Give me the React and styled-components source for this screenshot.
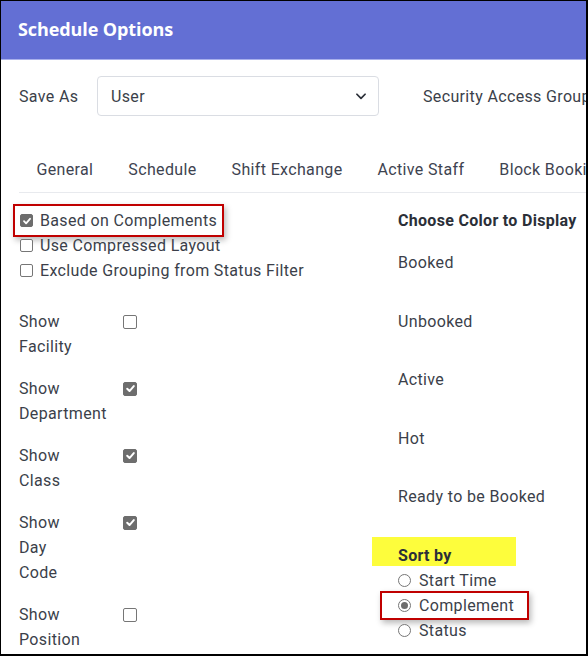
import React from 'react'
import styled, { createGlobalStyle } from 'styled-components'

const GlobalStyle = createGlobalStyle`
  html, body {
    margin: 0;
    padding: 0;
    background: #ffffff;
  }
  * {
    box-sizing: border-box;
  }
`

const Frame = styled.div`
  width: 588px;
  height: 656px;
  overflow: hidden;
  border: 1px solid #000;
  border-right-width: 2px;
  border-bottom-width: 2px;
  background: #fff;
  font-family: Roboto, 'Liberation Sans', sans-serif;
  font-size: 16px;
  letter-spacing: 0.35px;
  color: #3b3f4a;
  display: flex;
  flex-direction: column;
`

const Header = styled.header`
  height: 59px;
  flex: none;
  background: #636fd4;
  border-bottom: 1px solid #a9b0ec;
  display: flex;
  align-items: center;
  padding: 0 17px 3px;
`

const Title = styled.h1`
  margin: 0;
  color: #fff;
  font-family: 'Open Sans', Roboto, sans-serif;
  font-weight: 700;
  font-size: 18px;
  letter-spacing: -0.1px;
  white-space: nowrap;
`

const SaveRow = styled.div`
  display: flex;
  align-items: center;
  padding: 16px 0 0 18px;
  white-space: nowrap;
`

const FieldLabel = styled.span`
  width: 78px;
  flex: none;
`

const Select = styled.div`
  width: 282px;
  height: 40px;
  flex: none;
  border: 1px solid #dadde3;
  border-radius: 4px;
  display: flex;
  align-items: center;
  justify-content: space-between;
  padding: 0 10px 0 13px;
`

const SideLabel = styled.span`
  margin-left: 44px;
`

const Tabs = styled.nav`
  display: flex;
  margin: 32px 0 0 18px;
  border-bottom: 1px solid #e8eaee;
  white-space: nowrap;
`

const Tab = styled.span`
  padding: 10px 17.5px;
  line-height: 24px;
  color: #3e4350;
  flex: none;
`

const Body = styled.div`
  display: grid;
  grid-template-columns: 380px 1fr;
  padding: 15px 0 0 17px;
`

const Column = styled.div`
  display: flex;
  flex-direction: column;
  white-space: nowrap;
`

const CheckRow = styled.label`
  display: flex;
  align-items: center;
  gap: 7px;
  line-height: 25px;
  padding-left: 2px;
`

const Annotated = styled.div`
  display: flex;
  align-self: flex-start;
  border: 2px solid #c00000;
  box-shadow: 2px 3px 6px rgba(0, 0, 0, 0.28);
  margin: ${({ $margin }) => $margin};
  padding: ${({ $padding }) => $padding};
`

const Box = styled.span`
  width: ${({ $size }) => $size}px;
  height: ${({ $size }) => $size}px;
  flex: none;
  border-radius: 2px;
  border: 1px solid ${({ $checked }) => ($checked ? '#6d6d6d' : '#767676')};
  background: ${({ $checked }) => ($checked ? '#6d6d6d' : '#fff')};
  display: flex;
  align-items: center;
  justify-content: center;
`

const Checkbox = ({ checked, size = 13 }) => (
  <Box $checked={checked} $size={size}>
    {checked && (
      <svg width={size - 3} height={size - 3} viewBox="0 0 10 10">
        <path d="M2 5.2 L4.1 7.3 L8 2.8" fill="none" stroke="#fff" strokeWidth="1.8" strokeLinecap="round" strokeLinejoin="round" />
      </svg>
    )}
  </Box>
)

const ShowList = styled.div`
  display: flex;
  flex-direction: column;
  gap: 17px;
  margin-top: 26px;
  padding-left: 1px;
`

const ShowGroup = styled.div`
  display: grid;
  grid-template-columns: 104px 14px;
  align-items: start;
  line-height: 25px;
`

const ShowText = styled.div`
  display: flex;
  flex-direction: column;
`

const ShowBox = styled.div`
  height: 25px;
  display: flex;
  align-items: center;
`

const Heading = styled.div`
  font-weight: 700;
  line-height: 25px;
  color: #2b2f38;
  letter-spacing: 0.3px;
`

const ColorList = styled.div`
  display: flex;
  flex-direction: column;
  gap: 33.5px;
  margin-top: 17px;
`

const ColorLabel = styled.div`
  line-height: 25px;
`

const Marker = styled.div`
  align-self: flex-start;
  width: 144px;
  height: 29px;
  margin: 27.5px 0 2.5px -26px;
  padding: 6px 0 0 26px;
  background: #fdfd3c;
  display: flex;
  align-items: flex-start;
`

const RadioRow = styled.label`
  display: flex;
  align-items: center;
  gap: 8px;
  line-height: 25px;
`

const RadioCircle = styled.span`
  width: 13px;
  height: 13px;
  flex: none;
  border-radius: 50%;
  border: 1px solid #767676;
  background: #fff;
  display: flex;
  align-items: center;
  justify-content: center;

  &::after {
    content: '';
    width: 7px;
    height: 7px;
    border-radius: 50%;
    background: ${({ $checked }) => ($checked ? '#6d6d6d' : 'transparent')};
  }
`

const Radio = ({ checked, children }) => (
  <RadioRow>
    <RadioCircle $checked={checked} />
    {children}
  </RadioRow>
)

const showOptions = [
  { lines: ['Show', 'Facility'], checked: false },
  { lines: ['Show', 'Department'], checked: true },
  { lines: ['Show', 'Class'], checked: true },
  { lines: ['Show', 'Day', 'Code'], checked: true },
  { lines: ['Show', 'Position'], checked: false },
]

const colors = ['Booked', 'Unbooked', 'Active', 'Hot', 'Ready to be Booked']

const tabs = ['General', 'Schedule', 'Shift Exchange', 'Active Staff', 'Block Booking']

export default function App() {
  return (
    <Frame>
      <GlobalStyle />
      <Header>
        <Title>Schedule Options</Title>
      </Header>

      <SaveRow>
        <FieldLabel>Save As</FieldLabel>
        <Select>
          <span>User</span>
          <svg width="14" height="14" viewBox="0 0 24 24" fill="none" stroke="#2b2f38" strokeWidth="3" strokeLinecap="round" strokeLinejoin="round">
            <path d="M5 9l7 7 7-7" />
          </svg>
        </Select>
        <SideLabel>Security Access Group</SideLabel>
      </SaveRow>

      <Tabs>
        {tabs.map((t) => (
          <Tab key={t}>{t}</Tab>
        ))}
      </Tabs>

      <Body>
        <Column>
          <Annotated $margin="-4px 0 -4px -5px" $padding="2px 5px 2px 3px">
            <CheckRow>
              <Checkbox checked />
              Based on Complements
            </CheckRow>
          </Annotated>
          <CheckRow>
            <Checkbox />
            Use Compressed Layout
          </CheckRow>
          <CheckRow>
            <Checkbox />
            Exclude Grouping from Status Filter
          </CheckRow>

          <ShowList>
            {showOptions.map((o) => (
              <ShowGroup key={o.lines.join(' ')}>
                <ShowText>
                  {o.lines.map((l) => (
                    <span key={l}>{l}</span>
                  ))}
                </ShowText>
                <ShowBox>
                  <Checkbox checked={o.checked} size={14} />
                </ShowBox>
              </ShowGroup>
            ))}
          </ShowList>
        </Column>

        <Column>
          <Heading>Choose Color to Display</Heading>
          <ColorList>
            {colors.map((c) => (
              <ColorLabel key={c}>{c}</ColorLabel>
            ))}
          </ColorList>
          <Marker>
            <Heading>Sort by</Heading>
          </Marker>
          <Radio>Start Time</Radio>
          <Annotated $margin="-2px 0 -2px -18px" $padding="0 13px 0 16px">
            <Radio checked>Complement</Radio>
          </Annotated>
          <Radio>Status</Radio>
        </Column>
      </Body>
    </Frame>
  )
}
